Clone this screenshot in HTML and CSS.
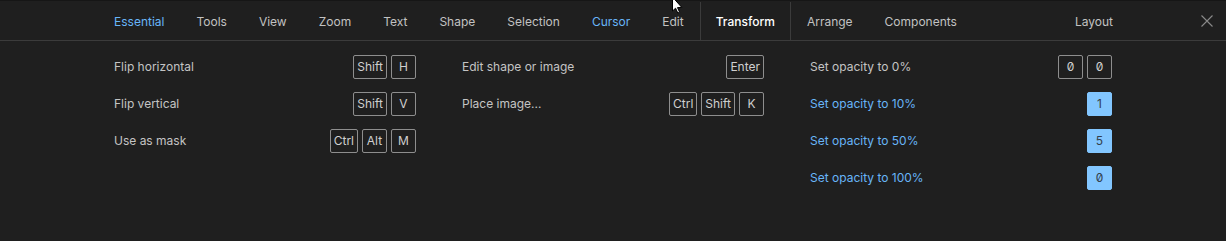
FILE: index.html
```html
<!DOCTYPE html>
<html lang="en">
<head>
    <meta charset="utf-8">
    <title>Keyboard shortcuts</title>
    <link rel="stylesheet" href="styles.css">
</head>
<body>

<div id="shortcuts">
    <div class="tabbar">
        <div class="tabs">
            <span class="tab blue">Essential</span>
            <span class="tab">Tools</span>
            <span class="tab">View</span>
            <span class="tab">Zoom</span>
            <span class="tab">Text</span>
            <span class="tab">Shape</span>
            <span class="tab">Selection</span>
            <span class="tab blue">Cursor</span>
            <span class="tab">Edit</span>
            <span class="tab active">Transform</span>
            <span class="tab">Arrange</span>
            <span class="tab">Components</span>
        </div>
        <span class="tab">Layout</span>
        <span class="close">
            <svg width="12" height="12" viewBox="0 0 12 12">
                <path d="M0.5 0.5 L11.5 11.5 M11.5 0.5 L0.5 11.5" stroke="#8a8a8a" stroke-width="1.1" fill="none"/>
            </svg>
        </span>
    </div>

    <div class="columns">
        <div class="col">
            <div class="row"><span class="label">Flip horizontal</span><span class="keys"><kbd>Shift</kbd><kbd>H</kbd></span></div>
            <div class="row"><span class="label">Flip vertical</span><span class="keys"><kbd>Shift</kbd><kbd>V</kbd></span></div>
            <div class="row"><span class="label">Use as mask</span><span class="keys"><kbd>Ctrl</kbd><kbd>Alt</kbd><kbd>M</kbd></span></div>
        </div>
        <div class="col">
            <div class="row"><span class="label">Edit shape or image</span><span class="keys"><kbd>Enter</kbd></span></div>
            <div class="row"><span class="label">Place image...</span><span class="keys"><kbd>Ctrl</kbd><kbd>Shift</kbd><kbd>K</kbd></span></div>
        </div>
        <div class="col">
            <div class="row"><span class="label">Set opacity to 0%</span><span class="keys"><kbd>0</kbd><kbd>0</kbd></span></div>
            <div class="row on"><span class="label">Set opacity to 10%</span><span class="keys"><kbd>1</kbd></span></div>
            <div class="row on"><span class="label">Set opacity to 50%</span><span class="keys"><kbd>5</kbd></span></div>
            <div class="row on"><span class="label">Set opacity to 100%</span><span class="keys"><kbd>0</kbd></span></div>
        </div>
    </div>
</div>

<svg class="pointer" width="12" height="16" viewBox="0 0 12 16">
    <path d="M0.5 -3 L0.5 11 L3.6 8.2 L5.8 13 L7.6 12.2 L5.5 7.6 L9.8 7.4 Z" fill="#ffffff" stroke="#000000" stroke-width="1"/>
</svg>

</body>
</html>
```

FILE: styles.css
```css
* {
    margin: 0;
    padding: 0;
    box-sizing: border-box;
}

body {
    background: #1f1f1f;
    font-family: Inter, "Noto Sans", sans-serif;
    font-size: 12px;
    color: #c4c4c4;
    width: 1226px;
    height: 241px;
    overflow: hidden;
}

#shortcuts {
    border-top: 1px solid #161616;
}

.tabbar {
    display: flex;
    align-items: stretch;
    height: 40px;
    border-bottom: 1px solid #3b3b3b;
    padding-left: 98px;
}

.tabs {
    display: flex;
    flex: 1;
}

.tab {
    display: flex;
    align-items: center;
    padding: 0 16px;
    margin-top: 1px;
    font-size: 12px;
    color: #c2c2c2;
}

.tab.blue {
    color: #68b5f8;
}

.tab.active {
    padding: 0 15px;
    font-weight: 500;
    color: #ffffff;
    border-left: 1px solid #3b3b3b;
    border-right: 1px solid #3b3b3b;
}

.close {
    display: flex;
    align-items: center;
    justify-content: center;
    width: 38px;
    margin-left: 59px;
}

.columns {
    display: grid;
    grid-template-columns: repeat(3, 302px);
    column-gap: 46px;
    padding: 7px 0 0 114px;
}

.row {
    display: flex;
    align-items: center;
    justify-content: space-between;
    height: 37px;
}

.row.on .label {
    color: #68b5f8;
}

.keys {
    display: flex;
    gap: 4px;
}

kbd {
    display: flex;
    align-items: center;
    justify-content: center;
    min-width: 25px;
    height: 24px;
    padding: 0 3px;
    border: 1px solid #8e8e8e;
    border-radius: 2px;
    font-family: Inter, "Noto Sans", sans-serif;
    font-size: 12px;
    font-feature-settings: "zero";
    color: #cfcfcf;
}

.row.on kbd {
    background: #82c6ff;
    border-color: #82c6ff;
    color: #33404c;
}

.pointer {
    position: absolute;
    left: 672px;
    top: 0;
}
```
